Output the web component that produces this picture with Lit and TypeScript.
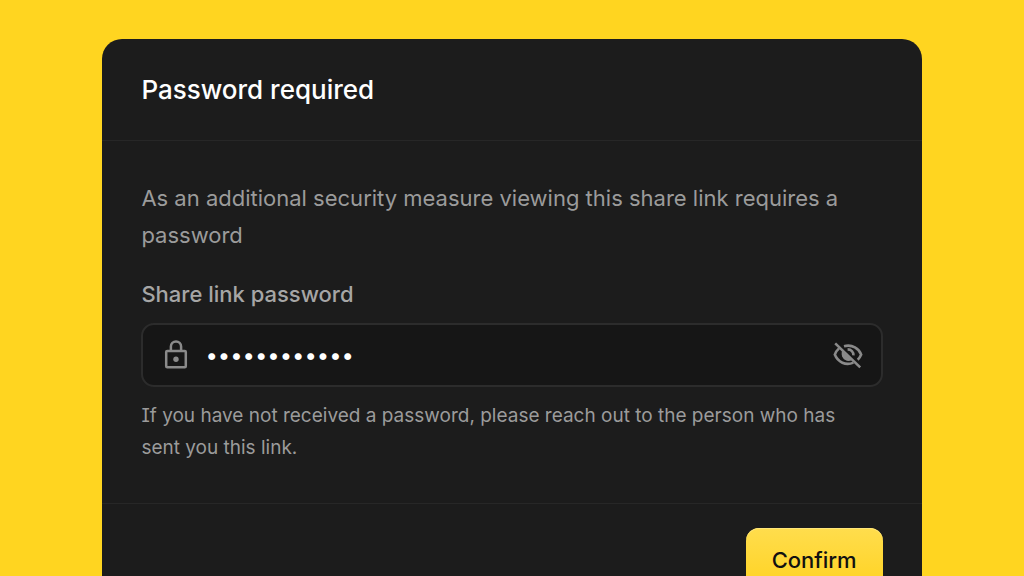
import { LitElement, html, css } from "lit";
import { customElement, state } from "lit/decorators.js";

@customElement("app-root")
export class AppRoot extends LitElement {
  @state() private visible = false;

  static styles = css`
    :host {
      display: block;
      box-sizing: border-box;
      height: 100vh;
      overflow: hidden;
      padding: 39px 10% 0;
      background: #ffd520;
      color: #fff;
      font-family: Inter, "Liberation Sans", sans-serif;
      font-feature-settings: "cv08";
    }
    .card {
      border-radius: 20px;
      background: #1c1c1c;
    }
    .header {
      padding: 33px 39px 32px;
      border-bottom: 1px solid #272727;
    }
    .title {
      margin: 0;
      font-size: 26px;
      line-height: 36px;
      font-weight: 450;
    }
    .body {
      padding: 39px;
      border-bottom: 1px solid #272727;
      color: #9b9b9b;
    }
    .intro {
      margin: 0 0 24px;
      font-size: 22px;
      line-height: 37px;
    }
    .label {
      display: block;
      margin-bottom: 13px;
      font-size: 22px;
      line-height: 32px;
      font-weight: 500;
      color: #a6a6a6;
    }
    .field {
      display: flex;
      align-items: center;
      gap: 13px;
      height: 60px;
      padding: 0 17px;
      border: 2px solid #2c2c2c;
      border-radius: 13px;
      background: #161616;
      color: #8a8a8a;
    }
    .input {
      flex: 1;
      min-width: 0;
      padding: 0;
      border: 0;
      outline: 0;
      background: none;
      color: #fff;
      font: inherit;
      font-size: 22px;
      line-height: 32px;
    }
    .toggle {
      display: flex;
      padding: 0;
      border: 0;
      background: none;
      color: inherit;
      cursor: pointer;
    }
    .icon {
      display: block;
      width: 32px;
      height: 32px;
      fill: none;
      stroke: currentColor;
    }
    .hint {
      max-width: 38em;
      margin: 13px 0 0;
      font-size: 19px;
      line-height: 32px;
    }
    .footer {
      display: flex;
      justify-content: flex-end;
      padding: 24px 39px;
    }
    .confirm {
      padding: 16px 26px;
      border: 0;
      border-radius: 13px;
      background: linear-gradient(#ffdd4d, #ffd21f);
      box-shadow: inset 0 1px 0 #ffe67a;
      color: #111;
      font: inherit;
      font-size: 22px;
      line-height: 32px;
      font-weight: 500;
    }
  `;

  render() {
    return html`
      <main class="card">
        <header class="header"><h1 class="title">Password required</h1></header>
        <section class="body">
          <p class="intro">
            As an additional security measure viewing this share link requires a password
          </p>
          <label class="label" for="password">Share link password</label>
          <div class="field">
            <svg class="icon" viewBox="0 0 32 32" stroke-width="2.5" stroke-linejoin="round" aria-hidden="true">
              <rect x="6.2" y="12" width="19.6" height="16.2" rx="1" />
              <path d="M10.9 12V7.6a5.1 5.1 0 0 1 10.2 0V12" />
              <circle cx="16" cy="20.2" r="2.7" fill="currentColor" stroke="none" />
            </svg>
            <input
              class="input"
              id="password"
              type=${this.visible ? "text" : "password"}
              value="sharedsecret"
              aria-describedby="hint"
            />
            <button
              class="toggle"
              type="button"
              aria-label="Toggle password visibility"
              @click=${() => (this.visible = !this.visible)}
            >
              <svg class="icon" viewBox="0 0 32 32" stroke-width="2.6" aria-hidden="true">
                <path d="M3.2 4.4 28.2 28.4" />
                <path d="M12 7.2C20.4 5 27 9.6 29.2 15.6c-.8 2-1.9 3.7-3.5 5.2" />
                <path d="M7 9.4C5 11.2 3.6 13.2 2.8 15.6c3 7.6 11 11.4 18.6 8" />
                <path d="M15.6 10.4c3.6 0 6 2.4 5.8 6" />
                <path d="M10.2 11.6 20 21c-5.6 3.4-12.4-2.2-9.8-9.4Z" fill="currentColor" stroke="none" />
              </svg>
            </button>
          </div>
          <p class="hint" id="hint">
            If you have not received a password, please reach out to the person who has sent you
            this link.
          </p>
        </section>
        <footer class="footer"><button class="confirm" type="button">Confirm</button></footer>
      </main>
    `;
  }
}
